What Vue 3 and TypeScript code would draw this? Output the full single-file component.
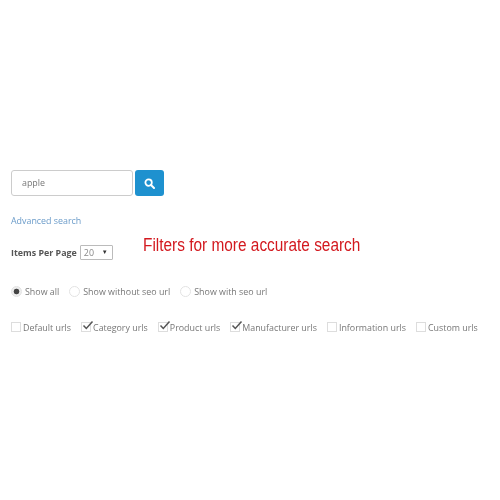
<script setup lang="ts">
const radios = [
  { label: 'Show all', checked: true },
  { label: 'Show without seo url', checked: false },
  { label: 'Show with seo url', checked: false }
]

const urlTypes = [
  { label: 'Default urls', checked: false },
  { label: 'Category urls', checked: true },
  { label: 'Product urls', checked: true },
  { label: 'Manufacturer urls', checked: true },
  { label: 'Information urls', checked: false },
  { label: 'Custom urls', checked: false }
]
</script>

<template>
  <div class="page">
    <div class="search-row">
      <div class="search-input">apple</div>
      <button class="search-btn" type="button" aria-label="Search">
        <svg width="11" height="11" viewBox="0 0 11 11" fill="none">
          <circle cx="4.6" cy="4.6" r="3.2" stroke="#fff" stroke-width="1.8" />
          <path d="M7 7l3 3" stroke="#fff" stroke-width="2" stroke-linecap="round" />
        </svg>
      </button>
    </div>

    <a class="advanced">Advanced search</a>

    <div class="per-page">
      <span class="per-label">Items Per Page</span>
      <div class="select">
        <span>20</span>
        <span class="arrow">▼</span>
      </div>
    </div>

    <div class="radios">
      <div v-for="r in radios" :key="r.label" class="radio-item">
        <span :class="['radio', { on: r.checked }]"></span>
        <span>{{ r.label }}</span>
      </div>
    </div>

    <div class="checks">
      <div v-for="c in urlTypes" :key="c.label" class="check-item">
        <span class="box">
          <svg v-if="c.checked" width="14" height="12" viewBox="0 0 14 12" fill="none">
            <path d="M2.5 5.5l2.8 3L11.5 1.5" stroke="#555" stroke-width="1.5" />
          </svg>
        </span>
        <span>{{ c.label }}</span>
      </div>
    </div>

    <!-- annotation drawn over the screenshot -->
    <span class="note">Filters for more accurate search</span>
  </div>
</template>

<style>
html, body { background: #fff; }
</style>

<style scoped>
.page {
  position: relative;
  width: 500px;
  height: 500px;
  box-sizing: border-box;
  padding: 170px 0 0 11px;
  font-family: "Open Sans", sans-serif;
  font-size: 8.9px;
  color: #777;
  overflow: hidden;
  filter: blur(0.3px);
}
.search-row { display: flex; gap: 2px; }
.search-input {
  width: 122px;
  height: 26px;
  box-sizing: border-box;
  border: 1px solid #ccc;
  border-radius: 3px;
  padding-left: 10px;
  line-height: 24px;
  color: #777;
}
.search-btn {
  width: 29px;
  height: 26px;
  padding: 0;
  border: none;
  border-radius: 3px;
  background: #1e91cf;
  display: flex;
  align-items: center;
  justify-content: center;
}
.advanced {
  display: block;
  margin-top: 18px;
  line-height: 13px;
  color: #6a9bc9;
}
.per-page {
  display: flex;
  align-items: center;
  margin-top: 13px;
  height: 24px;
}
.per-label { font-weight: 700; color: #555; }
.select {
  width: 33px;
  height: 15px;
  box-sizing: border-box;
  margin-left: 3px;
  border: 1px solid #bbb;
  border-radius: 1px;
  padding: 0 4px 0 3px;
  display: flex;
  align-items: center;
  justify-content: space-between;
  color: #888;
}
.arrow { font-size: 6px; color: #333; }
.note {
  position: absolute;
  left: 143px;
  top: 235px;
  font-family: "Liberation Sans", sans-serif;
  font-size: 17.5px;
  line-height: 20px;
  color: #d3191f;
  transform: scaleX(0.88);
  transform-origin: left center;
  white-space: nowrap;
}
.radios { display: flex; margin-top: 20px; height: 14px; align-items: center; }
.radio-item { display: flex; align-items: center; gap: 3px; margin-right: 10px; }
.radio {
  width: 11px;
  height: 11px;
  box-sizing: border-box;
  border: 1px solid #e2e2e2;
  border-radius: 50%;
}
.radio.on { background: radial-gradient(circle, #444 0 2.5px, #eee 3.2px); }
.checks { display: flex; margin-top: 22px; height: 14px; align-items: center; }
.check-item { display: flex; align-items: center; gap: 2px; margin-right: 10px; white-space: nowrap; }
.box {
  position: relative;
  width: 10px;
  height: 10px;
  box-sizing: border-box;
  border: 1px solid #ddd;
}
.box svg { position: absolute; left: -1px; top: -3px; }
</style>
